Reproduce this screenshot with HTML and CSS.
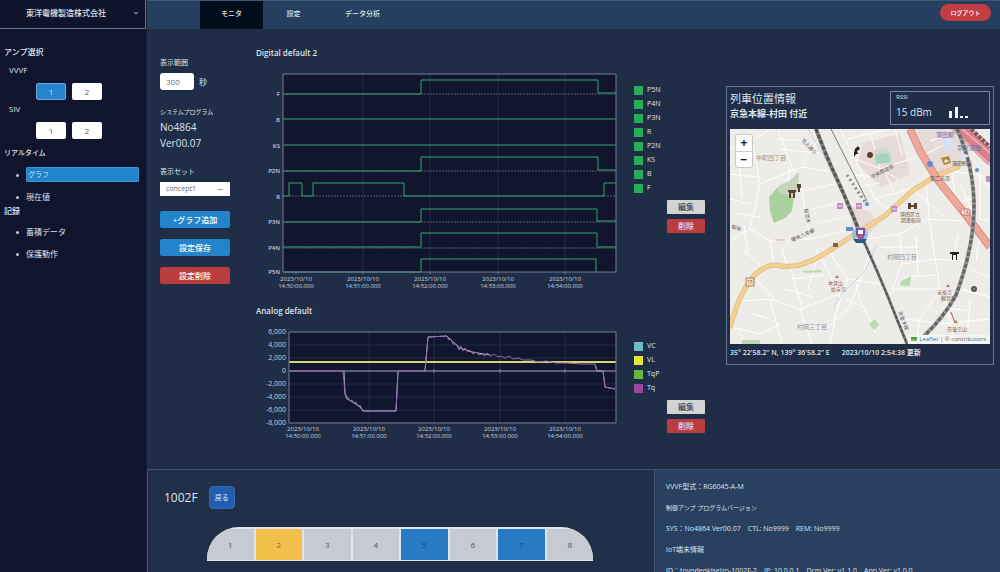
FILE: index.html
```html
<!DOCTYPE html>
<html lang="ja">
<head>
<meta charset="utf-8">
<meta name="viewport" content="width=device-width, initial-scale=1">
<title>モニタ</title>
<link rel="stylesheet" href="styles.css">
</head>
<body>
<div class="app">
  <aside class="sidebar">
    <button class="company" type="button"><span>東洋電機製造株式会社</span>
      <svg class="chevron" viewBox="0 0 6 4"><path d="M1 1l2 2 2-2"/></svg>
    </button>
    <div class="side-body">
      <h2 class="side-title">アンプ選択</h2>
      <h3 class="side-sub">VVVF</h3>
      <div class="amp-row"><button class="amp active" type="button">1</button><button class="amp" type="button">2</button></div>
      <h3 class="side-sub">SIV</h3>
      <div class="amp-row"><button class="amp" type="button">1</button><button class="amp" type="button">2</button></div>
      <h2 class="side-title realtime">リアルタイム</h2>
      <ul class="menu">
        <li><a class="current" href="#">グラフ</a></li>
        <li><a href="#">現在値</a></li>
      </ul>
      <h2 class="side-title">記録</h2>
      <ul class="menu">
        <li><a href="#">蓄積データ</a></li>
        <li><a href="#">保護動作</a></li>
      </ul>
    </div>
  </aside>

  <div class="page">
    <header class="topbar">
      <nav class="tabs">
        <a class="tab active" href="#">モニタ</a>
        <a class="tab" href="#">設定</a>
        <a class="tab" href="#">データ分析</a>
      </nav>
      <button class="logout" type="button">ログアウト</button>
    </header>

    <main class="monitor">
      <section class="controls">
        <label class="label" for="range">表示範囲</label>
        <div class="range-row"><input class="range" id="range" type="text" value="300"><span>秒</span></div>
        <div class="program">
          <p class="label kana">システムプログラム</p>
          <p>No4864</p>
          <p>Ver00.07</p>
        </div>
        <label class="label" for="set">表示セット</label>
        <select class="set" id="set"><option>concept1</option></select>
        <div class="actions">
          <button class="btn blue" type="button">+グラフ追加</button>
          <button class="btn blue" type="button">設定保存</button>
          <button class="btn red" type="button">設定削除</button>
        </div>
      </section>

      <section class="charts">
        <h2 class="chart-title">Digital default 2</h2>
        <div class="chart">
          <svg class="plot" viewBox="0 0 362 222">
            <rect class="area" x="27" y="4" width="333" height="198"/>
            <path class="grid" d="M107 4V202M174 4V202M242 4V202M309 4V202"/>
            <path class="base" d="M27 24H360M27 101H360M27 126H360M27 152H360M27 178H360"/>
            <g class="digital">
              <path d="M27 24H165V10H342V23H360"/>
              <path d="M27 49H360"/>
              <path d="M27 75H360"/>
              <path d="M27 101H165V87H342V100H360"/>
              <path d="M27 126H33V113H46V126H57V113H148V126H348V113H360"/>
              <path d="M27 152H165V139H341V151H360"/>
              <path d="M27 177H165V163H341V177H360"/>
              <path d="M27 202H165V189H340V202"/>
            </g>
            <path class="frame" d="M27 4H360V202H27ZM40 202v2M107 202v2M174 202v2M242 202v2M309 202v2"/>
            <g class="ylab">
              <text x="24" y="26">F</text><text x="24" y="52">B</text><text x="24" y="78">KS</text><text x="24" y="103">P2N</text>
              <text x="24" y="129">R</text><text x="24" y="154">P3N</text><text x="24" y="180">P4N</text><text x="24" y="204">P5N</text>
            </g>
            <g class="xlab">
              <text x="40" y="211">2023/10/10</text><text x="40" y="218">14:50:00.000</text>
              <text x="107" y="211">2023/10/10</text><text x="107" y="218">14:51:00.000</text>
              <text x="174" y="211">2023/10/10</text><text x="174" y="218">14:52:00.000</text>
              <text x="242" y="211">2023/10/10</text><text x="242" y="218">14:53:00.000</text>
              <text x="309" y="211">2023/10/10</text><text x="309" y="218">14:54:00.000</text>
            </g>
          </svg>
          <div class="side">
            <ul class="legend">
              <li><i class="swatch green"></i>P5N</li><li><i class="swatch green"></i>P4N</li><li><i class="swatch green"></i>P3N</li><li><i class="swatch green"></i>R</li>
              <li><i class="swatch green"></i>P2N</li><li><i class="swatch green"></i>KS</li><li><i class="swatch green"></i>B</li><li><i class="swatch green"></i>F</li>
            </ul>
            <button class="mini gray" type="button">編集</button>
            <button class="mini red" type="button">削除</button>
          </div>
        </div>

        <h2 class="chart-title second">Analog default</h2>
        <div class="chart">
          <svg class="plot" viewBox="0 0 362 116">
            <rect class="area" x="33" y="6" width="327" height="91"/>
            <path class="grid" d="M113 6V97M178 6V97M244 6V97M309 6V97M33 19H360M33 32H360M33 58H360M33 71H360M33 84H360"/>
            <path class="zero" d="M33 45H360"/>
            <path class="yellow-line" d="M33 36H360"/>
            <path class="trace cyan" d="M88 45L89 68 91 73 95 75 104 81 107 85H140L142 45M169 45L172 11 191 10 196 15 204 22 216 26 234 29M339 38L341 45H347L349 61 359 63"/>
            <path class="trace purple" d="M33 45H87L89 67 91 71 93 73 94 75 96 74 98 77 100 76 102 80 104 79 106 83 108 85H140L142 45H169L172 11 191 10 193 14 195 13 197 18 200 18 203 24 205 20 207 25 209 22 212 26 214 24 217 28 220 26 223 29 226 28 229 30 231 27 235 30 238 28 242 31 245 30 249 32 253 30 257 33 262 32 267 34 275 34 282 36 290 35 300 37 310 37 325 38 339 38 341 45H347L349 61 359 63"/>
            <path class="frame" d="M33 6H360V97H33ZM178 43v4M244 43v4M309 43v4"/>
            <g class="ylab num">
              <text x="30" y="8">6,000</text><text x="30" y="21">4,000</text><text x="30" y="34">2,000</text><text x="30" y="47">0</text>
              <text x="30" y="60">-2,000</text><text x="30" y="73">-4,000</text><text x="30" y="86">-6,000</text><text x="30" y="99">-8,000</text>
            </g>
            <g class="xlab">
              <text x="47" y="105">2023/10/10</text><text x="47" y="112">14:50:00.000</text>
              <text x="113" y="105">2023/10/10</text><text x="113" y="112">14:51:00.000</text>
              <text x="178" y="105">2023/10/10</text><text x="178" y="112">14:52:00.000</text>
              <text x="244" y="105">2023/10/10</text><text x="244" y="112">14:53:00.000</text>
              <text x="309" y="105">2023/10/10</text><text x="309" y="112">14:54:00.000</text>
            </g>
          </svg>
          <div class="side">
            <ul class="legend">
              <li><i class="swatch cyan"></i>VC</li><li><i class="swatch yellow"></i>VL</li><li><i class="swatch lime"></i>TqP</li><li><i class="swatch purple"></i>Tq</li>
            </ul>
            <button class="mini gray" type="button">編集</button>
            <button class="mini red" type="button">削除</button>
          </div>
        </div>
      </section>

      <section class="location">
        <div class="loc-head">
          <div><h2 class="loc-title">列車位置情報</h2><p class="loc-place">京急本線-村田 付近</p></div>
          <div class="rssi">
            <div><p class="rssi-name">RSSI</p><p class="rssi-value">15 dBm</p></div>
            <svg class="bars" viewBox="0 0 21 13"><path d="M1 12V5h3v7zM7 12V1h3v11zM12 12v-2h3v2zM17 12v-2h3v2z"/></svg>
          </div>
        </div>
        <div class="map">
          <svg class="map-svg" viewBox="0 0 260 215" preserveAspectRatio="xMidYMid slice">
            <rect width="260" height="215" fill="#eeece8"/>
            <path fill="#e6dbd8" d="M133 14L170 5 180 46 150 58 128 35ZM186 0h42l10 28-34 18zM122 78l18 4 8 14-14 14-12-8z"/>
            <g class="streets">
              <path d="M0 20L22 12 40 0M22 12L30 55 20 100 0 112M30 55L72 38 98 42M48 0L62 38 72 62 80 110M72 62L105 55M80 110L40 112 20 100M40 112L44 135M72 36L90 8M20 75L0 70M80 110L122 100M86 120L110 165 100 215M110 165L70 180 40 170 9 172M40 170L52 215M70 180L82 215M60 138L72 178M26 150L46 172M0 198L30 205 50 195M100 124L118 150 150 155M118 150L104 190M136 110L170 105 196 90 232 92M170 105L172 135 162 160M172 135L205 130 238 132M205 130L200 96M205 130L210 160 190 190M162 160L210 160 226 166M178 190L210 195 260 190M190 190L186 215M240 140L260 148M230 160L260 168M215 170L225 215M110 0L145 70 180 60M145 70L160 82M118 10L140 4 160 0M140 4L150 40 168 50M120 28L150 40 186 28M165 0L172 26M196 54L200 96M186 62L216 90M222 42L250 46 260 60M222 42L225 72 244 70M250 46L250 90 260 92M12 120L30 136M88 128L78 160M140 124L120 178 96 200M176 200L160 180M0 45L28 48M8 18L12 68M48 10L76 12"/>
              <path d="M6 84L30 88M14 96L18 124M48 20L88 24M60 38L58 55M82 80L108 74M88 94L116 88M52 118L56 134M62 150L94 146M54 160L84 168M20 184L40 190M8 204L20 215M116 170L134 178 146 204M126 154L132 178M150 118L188 118M186 106L188 146M174 148L206 146M228 106L224 128M250 104L246 132M212 178L238 182M240 172L238 198M122 46L144 48M128 58L150 54M156 46L164 62M200 12L212 8M194 26L214 16M230 54L242 82"/>
            </g>
            <path fill="none" stroke="#c9d7dc" stroke-width="1" d="M146 116Q138 142 126 151T104 178M78 0L100 38"/>
            <path fill="#a8d19e" d="M39 68L48 58 50 64 64 66 62 82 55 89 44 94 40 82Z"/>
            <path fill="#c7d3ba" d="M48 57L59 52 69 43 68 62 62 68 50 64Z"/>
            <path fill="#cfd8ce" d="M144 21L158 19 162 30 158 36 146 33Z"/>
            <path fill="#a4d3bf" d="M145 26L158 24 161 33 146 35Z"/>
            <path fill="#b9dbae" d="M71 142L90 141 92 143 76 144ZM170 153L181 147 180 157 171 157ZM139 195L145 190 149 196 144 201ZM12 211h18v4H12Z"/>
            <g fill="none">
              <path stroke="#d6b276" stroke-width="5" d="M0 199Q8 168 20 152T46 136Q66 142 94 125L119 109 156 86 182 62 206 47 230 37"/>
              <path stroke="#f4cf90" stroke-width="4" d="M0 199Q8 168 20 152T46 136Q66 142 94 125L119 109 156 86 182 62 206 47 230 37"/>
              <path stroke="#d98f88" stroke-width="8" d="M180 0L190 22 207 50 236 86 260 118"/>
              <path stroke="#eda79b" stroke-width="6" d="M180 0L190 22 207 50 236 86 260 118"/>
              <path stroke="#d9808b" stroke-width="13" d="M226-4L262 31"/>
              <path stroke="#ecabb1" stroke-width="2" d="M222 0L260 36M232 0L260 24"/>
              <path stroke="#885660" stroke-width="4" stroke-dasharray="4 1" d="M241 0L260 18"/>
              <path stroke="#777" stroke-width="1" d="M101 0L137 72"/>
              <path stroke="#8a8a8a" stroke-width="3" stroke-dasharray="2 3" d="M117 46L137 76"/>
              <path stroke="#888" stroke-width="4" d="M86 0Q97 29 106 48T130 104"/>
              <path stroke="#555" stroke-width="3" stroke-dasharray="4 2" d="M86 0Q97 29 106 48T130 104"/>
              <path stroke="#888" stroke-width="3" d="M132 108L147 142 156 163 177 215"/>
              <path stroke="#555" stroke-width="2" stroke-dasharray="4 1" d="M132 108L147 142 156 163 177 215"/>
              <path stroke="#999" stroke-width="4" d="M227 0Q244 38 244 78T226 166Q214 188 194 207"/>
              <path stroke="#666" stroke-width="3" stroke-dasharray="4 2" d="M227 0Q244 38 244 78T226 166Q214 188 194 207"/>
              <path stroke="#a5664f" stroke-width="1" d="M221 183L225 194"/>
            </g>
            <g class="map-label">
              <text x="26" y="31">中町四丁目</text>
              <text x="157" y="130">村岡四丁目</text>
              <text x="67" y="200">村岡三丁目</text>
            </g>
            <g class="map-poi">
              <text x="170" y="87">蒲田区立</text><text x="171" y="93">図書館前</text>
              <text x="98" y="156">本覚山</text><text x="101" y="162">妙安寺</text>
              <text x="207" y="165">安楽寺</text><text x="211" y="171">観音堂</text>
              <text x="217" y="202">日蓮宗山</text>
            </g>
            <g class="map-road">
              <text transform="translate(71 11) rotate(48)">池上通り</text>
              <text transform="translate(74 80) rotate(78)">桜並木</text>
              <text transform="translate(62 113) rotate(-24)">環状八号線</text>
              <text transform="translate(168 183) rotate(68)">京急本線</text>
              <text transform="translate(1 99) rotate(18)">桜坂</text>
              <text x="200" y="51">第二京浜</text><text x="222" y="36">蒲田駅前</text>
              <text transform="translate(142 50) rotate(-28)">中央商店街</text>
            </g>
            <g fill="#5c4031">
              <path d="M58 61h8v2h-1v6h-2v-5h-2v5h-2v-6h-1zM67 55h4v4h-1v4h-2v-4h-1z"/>
              <path fill="#222" d="M220 123h9v2h-2v6h-1v-5h-3v5h-1v-6h-2zM125 20l3-3 2 3-3 2 1 3h-2l-2 3v-4z"/>
              <path d="M178 74h3v2h3v-2h3v6h-3v-2h-3v2h-3z"/>
              <circle cx="140" cy="26" r="3"/><circle cx="244" cy="160" r="3" fill="#555"/><circle cx="244" cy="160" r="1" fill="#999"/>
              <path fill="#a57b56" d="M107 146l2 3h-4zM218 155l2 3h-4zM226 191l2 3h-4z"/>
            </g>
            <path fill="#a98a36" d="M211 29l8-2 2 7-7 2z"/><path stroke="#fff" d="M214 32h5M216 30v4"/>
            <g fill="#bd92bd"><path d="M107 74h6v6h-6zM126 74h6v6h-6zM161 77h6v6h-6zM256 47h4v6h-4z"/></g>
            <path stroke="#f3e4f3" d="M108 77h4M127 77h4M162 80h4"/>
            <g fill="#5c91c9"><circle cx="200" cy="35" r="3"/><circle cx="247" cy="41" r="2"/><circle cx="137" cy="75" r="2"/><path d="M116 98h7v4h-7z"/></g>
            <path fill="#d6e1f3" d="M212 11l9-3 3 8-6 6-6-4zM230 24l10 2-7 5z"/>
            <g fill="#626ca8" font-size="6"><text x="206" y="8">蒲田駅</text><text x="227" y="21">京急蒲田</text></g>
            <rect x="231" y="80" width="9" height="6" rx="2" fill="#f8e6e4" stroke="#c36b65"/><text x="233" y="85" font-size="5" fill="#a34742">14</text>
            <rect x="16" y="149" width="8" height="8" fill="#f8e2b9" stroke="#a3845a"/><text x="17" y="155" font-size="5" fill="#75562f">15</text>
            <rect x="103" y="114" width="5" height="4" fill="#766448"/>
            <path stroke="#dda7a4" stroke-width="1" d="M45 111h10"/>
            <circle cx="130" cy="106" r="8" fill="#79b9da" fill-opacity=".7"/>
            <path fill="#245c83" d="M123 110h14l-3 4h-8z"/><path fill="#79519f" d="M126 99h9v7l-4 6-5-6z"/><path fill="#fff" d="M128 101h5v4h-5z"/><path fill="#df4b7a" d="M128 106h5l-2 4z"/>
          </svg>
          <div class="zoom"><button type="button" aria-label="拡大">+</button><button type="button" aria-label="縮小">−</button></div>
          <p class="credit"><i class="flag"></i><a href="#">Leaflet</a> | © contributors</p>
        </div>
        <p class="loc-foot"><span>35° 22'58.2" N, 139° 36'58.2" E</span><span>2023/10/10 2:54:38 更新</span></p>
      </section>
    </main>

    <footer class="bottom">
      <section class="formation">
        <div class="form-head"><h2 class="form-name">1002F</h2><button class="back" type="button">戻る</button></div>
        <div class="train">
          <button class="car" type="button">1</button><button class="car warn" type="button">2</button><button class="car" type="button">3</button><button class="car" type="button">4</button><button class="car blue" type="button">5</button><button class="car" type="button">6</button><button class="car blue" type="button">7</button><button class="car" type="button">8</button>
        </div>
      </section>
      <section class="info">
        <p>VVVF型式：RG6045-A-M</p>
        <p class="kana">制御アンプ プログラムバージョン</p>
        <p><span>SYS：No4864 Ver00.07</span><span>CTL: No9999</span><span>REM: No9999</span></p>
        <p>IoT端末情報</p>
        <p><span>ID：toyodenkiseizo-1002F-2</span><span>IP: 10.0.0.1</span><span>Dcm Ver: v1.1.0</span><span>App Ver: v1.0.0</span></p>
      </section>
    </footer>
  </div>
</div>
</body>
</html>
```
FILE: styles.css
```css
* { box-sizing: border-box; margin: 0; padding: 0; }
body { font: 8px/14px "Open Sans", "Noto Sans CJK JP", sans-serif; color: #dce3ec; background: #1f2e46; }
button, input, select { font: inherit; color: inherit; border: 0; }
a { color: inherit; text-decoration: none; }
h2, h3 { font-size: inherit; font-weight: 400; }
ul { list-style: none; }

.app { display: grid; grid-template-columns: 147px 1fr; height: 100vh; overflow: hidden; }
.page { display: flex; flex-direction: column; min-width: 0; }

.sidebar { background: #10152d; border-right: 1px solid #18213a; }
.company { display: flex; align-items: center; width: 100%; height: 29px; padding: 0 6px 2px 26px; background: #0f142b; border: solid #65708a; border-width: 0 1px 1px 0; font-weight: 500; }
.company span { flex: 1; text-align: left; white-space: nowrap; }
.chevron { width: 6px; fill: none; stroke: #aeb7c5; }
.side-body { padding: 16px 7px 0 4px; }
.side-title { font-weight: 500; }
.side-sub { padding: 4px 0 0 5px; }
.amp-row { display: flex; gap: 6px; padding: 6px 0 0 32px; }
.amp-row + .side-sub { padding-top: 2px; }
.amp { width: 30px; height: 17px; border-radius: 2px; background: #fff; color: #555b68; }
.amp.active { background: #2783cb; color: #d9edff; border: 1px solid #68a9de; }
.realtime { padding-top: 7px; font-size: 7px; }
.menu { display: grid; gap: 7px; padding: 7px 0 0 22px; }
.menu + .side-title { line-height: 13px; }
.menu a { display: block; line-height: 15px; position: relative; }
.menu a::before { content: ""; position: absolute; left: -10px; top: 7px; width: 3px; height: 3px; border-radius: 50%; background: #c1cad6; }
.menu .current { background: #2084cc; border-radius: 2px; padding-left: 2px; box-shadow: inset 0 0 0 1px #3b93d3; font-size: 7px; }

.topbar { display: flex; justify-content: space-between; height: 29px; padding: 0 9px 0 53px; background: #263f5f; border-top: 1px solid #415573; }
.tabs { display: flex; }
.tab { min-width: 61px; padding: 0 21px; line-height: 25px; font-size: 7px; text-align: center; font-weight: 500; }
.tab.active { background: #020d1b; }
.logout { width: 51px; height: 17px; margin-top: 3px; border-radius: 9px; background: #c33d42; color: #fff; font-size: 6px; font-weight: 500; }

.monitor { display: grid; grid-template-columns: 70px minmax(0, 496fr) minmax(0, 268fr); padding: 17px 6px 27px 13px; }
.controls { padding-top: 10px; }
.label { display: block; line-height: 14px; font-size: 7px; }
.range-row { display: flex; align-items: center; gap: 5px; padding-top: 3px; }
.range { width: 34px; height: 17px; padding: 0 6px; border-radius: 3px; background: #fff; color: #626875; }
.program { padding: 15px 0 14px; font-size: 10px; line-height: 16px; }
.kana, .info .kana { font-size: 6px; white-space: nowrap; }
.set { appearance: none; display: block; width: 100%; height: 14px; margin-top: 3px; padding: 0 6px; background: #fff linear-gradient(#9aa2b0, #9aa2b0) no-repeat right 7px center / 5px 1px; color: #626875; font-size: 7px; line-height: 14px; }
.actions { display: grid; gap: 11px; padding-top: 15px; }
.btn { height: 17px; border-radius: 2px; color: #fff; font-weight: 500; }
.blue { background: #2384cc; }
.red { background: #b93c3f; }

.charts { margin: 0 21px 0 26px; }
.chart-title { font-weight: 600; line-height: 14px; padding-bottom: 10px; }
.second { padding-top: 12px; padding-bottom: 8px; }
.chart { display: grid; grid-template-columns: 1fr 71px; column-gap: 16px; }
.plot { display: block; width: 100%; }
.area { fill: #11162e; }
.grid, .frame, .digital, .trace, .base, .zero, .yellow-line { fill: none; stroke-width: 1; }
.grid { stroke: #232b44; }
.base { stroke: #525d70; stroke-dasharray: 2 1; }
.frame { stroke: #717e91; }
.digital { stroke: #32a66d; }
.zero { stroke: #a5a9ba; }
.yellow-line { stroke: #d5d76e; stroke-width: 2; }
.trace.cyan { stroke: #a4b8cb; }
.trace.purple { stroke: #9d66ad; }
.ylab { text-anchor: end; font-size: 6px; font-weight: 600; fill: #c5cedb; }
.num { font-size: 7px; font-weight: 400; }
.xlab { text-anchor: middle; font-size: 6px; fill: #c9d2de; }
.side { display: flex; flex-direction: column; gap: 5px; padding-top: 13px; }
.legend li { display: flex; align-items: center; gap: 4px; height: 14px; font-size: 7px; }
.swatch { width: 9px; height: 9px; }
.green { background: #28ad58; }
.cyan { background: #6cbdc6; }
.yellow { background: #e9e63b; }
.lime { background: #66b93c; }
.purple { background: #98489f; }
.mini { align-self: flex-end; width: 38px; height: 14px; border-radius: 1px; font-size: 8px; line-height: 14px; font-weight: 500; }
.mini.gray { background: #d3d3d5; color: #3f4249; }

.location { align-self: start; margin-top: 40px; padding: 4px 3px; border: 1px solid #67778e; }
.loc-head { display: flex; justify-content: space-between; height: 38px; }
.loc-title { font-size: 11px; line-height: 16px; }
.loc-place { font-size: 9px; line-height: 14px; font-weight: 700; }
.rssi { display: flex; justify-content: space-between; align-items: flex-end; width: 100px; height: 34px; padding: 0 20px 5px 5px; border: 1px solid #77869b; }
.rssi-name { font-size: 6px; line-height: 10px; }
.rssi-value { font-size: 10px; line-height: 14px; padding-top: 3px; }
.bars { width: 21px; fill: #edf3f9; }
.map { position: relative; overflow: hidden; }
.map-svg { display: block; width: 100%; }
.streets { fill: none; stroke: #fff; stroke-width: 1; }
.map-label { font-size: 6px; fill: #929294; }
.map-poi { font-size: 5px; fill: #7f604f; }
.map-road { font-size: 5px; fill: #4f4f54; }
.zoom { position: absolute; left: 6px; top: 6px; width: 16px; border-radius: 2px; background: #fff; box-shadow: 0 0 0 1px #c9c9c9; }
.zoom button { display: block; width: 16px; height: 16px; background: none; color: #111; font-size: 12px; line-height: 16px; font-weight: 700; }
.zoom button + button { border-top: 1px solid #ccc; }
.credit { position: absolute; right: 0; bottom: 0; padding: 0 4px 0 3px; background: #f5f4f2; color: #5e646a; font-size: 6px; line-height: 9px; }
.credit a { color: #2582ad; }
.flag { display: inline-block; width: 6px; height: 4px; margin-right: 2px; background: linear-gradient(#3d9e5f 50%, #8aba39 50%); }
.loc-foot { display: flex; gap: 12px; padding-top: 2px; font-size: 7px; font-weight: 600; white-space: nowrap; }

.bottom { flex: 1; display: grid; grid-template-columns: minmax(0, 508fr) minmax(0, 345fr); }
.formation { padding: 16px 61px 0 16px; background: #1f3048; border: solid #42536b; border-width: 1px 1px 0 1px; }
.form-head { display: flex; align-items: center; gap: 11px; }
.form-name { font-size: 12px; }
.back { width: 26px; height: 23px; border-radius: 4px; background: #245caf; color: #dcecff; border: 1px solid #3468b3; font-size: 7px; }
.train { display: grid; grid-template-columns: repeat(8, 1fr); gap: 2px; height: 34px; margin: 18px 0 0 43px; padding: 2px 0 1px; background: #e1e4e9; border-radius: 32px 32px 0 0; overflow: hidden; }
.car { background: #c5cad3; color: #4e5664; }
.car.warn { background: #f4c04c; color: #886c32; }
.car.blue { background: #277bc5; color: #173f72; }
.info { padding: 10px 11px 0; background: #2a4060; border-top: 1px solid #3d516d; font-size: 7px; line-height: 14px; white-space: nowrap; }
.info p { display: flex; gap: 7px; padding-bottom: 7px; }
```
